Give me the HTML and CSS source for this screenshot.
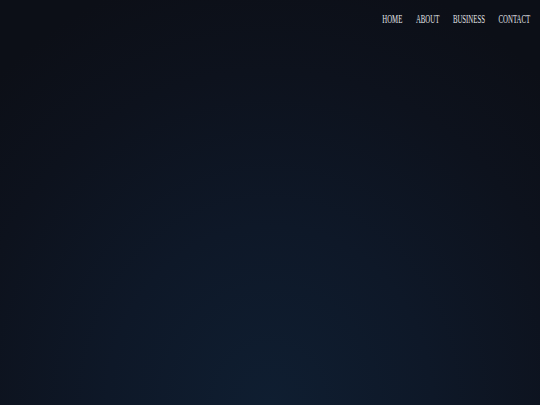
FILE: index.html
```html
<!DOCTYPE html>
<html>
<head>
<meta charset="utf-8">
<link rel="stylesheet" href="styles.css">
</head>
<body>
<div class="page">
  <header class="header">
    <nav class="nav">
      <a href="#" class="nav-link">HOME</a>
      <a href="#" class="nav-link">ABOUT</a>
      <a href="#" class="nav-link">BUSINESS</a>
      <a href="#" class="nav-link">CONTACT</a>
    </nav>
  </header>
</div>
</body>
</html>
```
FILE: styles.css
```css
html, body {
  margin: 0;
  padding: 0;
  height: 100%;
}
body {
  background: #0c0f17;
}
.page {
  width: 100%;
  height: 100%;
  background: radial-gradient(ellipse 75% 110% at 50% 100%, #0f1e31 0%, #0e1828 40%, #0d121d 75%, #0c0f17 100%);
}
.header {
  display: flex;
  justify-content: flex-end;
  padding: 12px 10px 0 0;
}
.nav {
  display: flex;
  gap: 24px;
  transform: scaleX(0.566);
  transform-origin: right center;
}
.nav-link {
  font-family: "Liberation Serif", "Times New Roman", serif;
  font-size: 12px;
  line-height: 14px;
  color: #e2e4e8;
  text-decoration: none;
}
```
